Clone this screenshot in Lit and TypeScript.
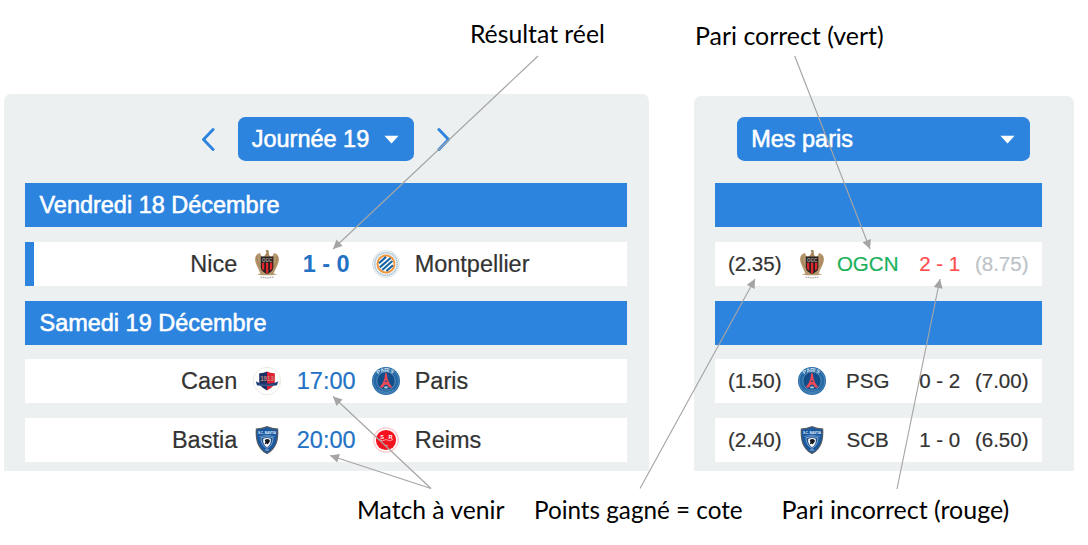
import { LitElement, html, svg, css } from "lit";
import { customElement, property } from "lit/decorators.js";

type Club = "nice" | "montpellier" | "caen" | "paris" | "bastia" | "reims";

const crests: Record<Club, unknown> = {
  nice: svg`
    <path d="M13.6 2.2 C12 .8 12.6 -.2 14 0 C15.8 0 16.2 1.4 15.6 2.6 L16.4 6 L11.8 6 Z" fill="#a5835a"/>
    <path d="M11.5 5.5 C9 8.5 7.6 5 7 3 C3.4 3.6 1.6 7 2.2 10.5 C2.6 14 4.6 17 5.6 19.4 L7.4 23.4 L3.8 24.6 L9.4 25.2 L18.6 25.2 L24.2 24.6 L20.6 23.4 L22.4 19.4 C23.6 17 25.4 14 25.8 10.5 C26.4 7 24.6 3.6 21 3 C20.4 5 19 8.5 16.5 5.5 Z" fill="#b6966c"/>
    <path d="M4 6 C3.4 10 5.2 14 7 17 M24 6 C24.6 10 22.8 14 21 17" stroke="#9a7a50" stroke-width=".8" fill="none"/>
    <path d="M7.8 6.4 H20.4 V17 C20.4 20.5 17.6 22.6 14.1 24 C10.6 22.6 7.8 20.5 7.8 17 Z" fill="#2a2222"/>
    <path d="M9 12.8 H11.2 V20.8 L9 18.8 Z M13 12.8 H15.2 V23 L14.1 23.4 L13 23 Z M17 12.8 H19.2 V18.8 L17 20.8 Z" fill="#e2262c"/>
    <text x="14.1" y="11.9" font-size="5.8" font-weight="700" text-anchor="middle" textLength="10.4" lengthAdjust="spacingAndGlyphs" fill="#a9a19a">OGC</text>
    <path d="M7.5 27 Q14 28.6 20.5 27" stroke="#a9a39d" stroke-width="1.2" stroke-dasharray="1.6 .7" fill="none"/>`,
  montpellier: svg`
    <circle cx="14" cy="14" r="13.4" fill="#f3f6f8" stroke="#d3d9dc" stroke-width=".8"/>
    <circle cx="14" cy="14" r="11.3" fill="none" stroke="#9fbfd1" stroke-width="1.5" stroke-dasharray="1.3 .6"/>
    <circle cx="14" cy="14" r="8.5" fill="#fff" stroke="#f2953d" stroke-width="1.9"/>
    <g stroke="#1565a4" stroke-width="2.1"><path d="M7 13.2 L14 6.9 M7.8 17.4 L18.6 8 M10.2 20 L20.4 11 M14.4 21 L21 15.2"/></g>`,
  caen: svg`
    <circle cx="14" cy="14" r="13.7" fill="#fff" stroke="#eae7dc" stroke-width=".9"/>
    <path d="M6.2 6.2 Q10.5 6.4 14 4.4 V23.4 C10 21.4 6.2 18.6 6.2 14 Z" fill="#1c3162"/>
    <path d="M21.8 6.2 Q17.5 6.4 14 4.4 V23.4 C18 21.4 21.8 18.6 21.8 14 Z" fill="#e01f33"/>
    <path d="M2.8 14.2 Q6 16.6 14 16.6 Q22 16.6 25.2 14.2 L24 18.2 Q20 19.2 14 19.2 Q8 19.2 4 18.2 Z" fill="#1b3c74"/>
    <path d="M6.5 18 Q14 18.8 21.5 18" stroke="#8fa1c1" stroke-width=".4" fill="none"/>
    <text x="14" y="13.9" font-size="6.4" font-weight="700" text-anchor="middle" textLength="13.6" lengthAdjust="spacingAndGlyphs" fill="#c08a7c">1913</text>`,
  paris: svg`
    <circle cx="14" cy="14" r="14" fill="#2468a5"/>
    <circle cx="14" cy="14" r="12.9" fill="none" stroke="#5f94c1" stroke-width=".7"/>
    <circle cx="14" cy="14" r="9.2" fill="#114e89" stroke="#7eaad0" stroke-width=".6"/>
    <text x="6.1 9.1 12.3 15.6 17.7" y="7.5 5.7 4.8 4.8 5.3" rotate="-32 -18 0 10 25" font-size="5.3" font-weight="700" fill="#d4e3f0">PARIS</text>
    <path d="M13.2 6.3 H14.8 L15.5 11.5 L17.3 16 L20.4 20.4 H16.8 Q16.3 17.8 14 17.6 Q11.7 17.8 11.2 20.4 H7.6 L10.7 16 L12.5 11.5 Z" fill="#ee4956"/>
    <path d="M12.8 15 L14 12.8 L15.2 15 Z" fill="#174f88"/>
    <path d="M11.8 20.3 Q14 18.2 16.2 20.3 L15.3 21.6 H12.7 Z" fill="#a9c2d5"/>
    <path d="M6.5 22.7 Q14 28 21.5 22.7" fill="none" stroke="#79a6cc" stroke-width=".9" stroke-dasharray="1.2 .6"/>`,
  bastia: svg`
    <path d="M14 0 Q19 2.4 25.2 2.5 C25.8 13 24.6 22.5 14 28.2 C3.4 22.5 2.2 13 2.8 2.5 Q9 2.4 14 0 Z" fill="#505965"/>
    <path d="M14 1.4 Q19 3.5 24 3.7 C24.3 13 23 21.5 14 26.7 C5 21.5 3.7 13 4 3.7 Q9 3.5 14 1.4 Z" fill="#1759a3"/>
    <path d="M6.2 10.6 Q14 7.6 21.8 10.6" stroke="#8fb0d4" stroke-width=".6" fill="none"/>
    <path d="M8 11.8 Q14 9.6 20 11.8 C20 16 18 20.5 14 22.4 C10 20.5 8 16 8 11.8 Z" fill="#1e518c" stroke="#9fbbd9" stroke-width=".8"/>
    <path d="M10.2 13 Q14 11 17.8 13 Q18.3 18.5 14 21.2 Q9.7 18.5 10.2 13 Z" fill="#fff"/>
    <path d="M11.7 14 Q14.5 12.2 16.7 14 Q17.4 16 15.6 17.3 L14.4 18.6 L13.4 17.5 L11.6 18.4 L12.4 16 Z" fill="#15181e"/>
    <text x="14" y="8" font-size="4.2" font-weight="700" text-anchor="middle" textLength="18" lengthAdjust="spacingAndGlyphs" fill="#e7eef6">S.C. BASTIA</text>
    <path d="M12.2 24 H15.8" stroke="#c1d1e5" stroke-width=".9"/>`,
  reims: svg`
    <circle cx="14" cy="14" r="12.1" fill="none" stroke="#f9babd" stroke-width="1.4" stroke-dasharray="1.4 .5"/>
    <circle cx="14" cy="14" r="10.1" fill="#f5121f"/>
    <text x="10" y="12.6" font-size="5.6" font-weight="700" text-anchor="middle" fill="#fff">S</text>
    <text x="18.4" y="12.6" font-size="5.6" font-weight="700" text-anchor="middle" fill="#fff">R</text>
    <path d="M6.8 13.4 Q10 16 14 13.6 Q18 16 21.2 13.4 M12.4 19.4 H15.6" stroke="#ffc1c4" stroke-width=".8" fill="none"/>`,
};

@customElement("club-crest")
export class ClubCrest extends LitElement {
  @property() club: Club = "nice";
  static styles = css`
    :host { display: block; width: 28px; height: 28px; }
    svg { display: block; overflow: visible; font-family: "Liberation Sans", Arial, sans-serif; -webkit-text-stroke: 0; }
  `;
  render() {
    return html`<svg width="28" height="28" viewBox="0 0 28 28">${crests[this.club]}</svg>`;
  }
}

interface Bet {
  home: string; homeClub: Club; score: string; played?: boolean; away: string; awayClub: Club;
  oddsWin: string; pick: Club; code: string; codeTone: string; guess: string; guessTone: string;
  oddsScore: string; oddsTone: string;
}

const days: { label: string; games: Bet[] }[] = [
  {
    label: "Vendredi 18 Décembre",
    games: [
      { home: "Nice", homeClub: "nice", score: "1 - 0", played: true, away: "Montpellier", awayClub: "montpellier",
        oddsWin: "(2.35)", pick: "nice", code: "OGCN", codeTone: "good", guess: "2 - 1", guessTone: "bad",
        oddsScore: "(8.75)", oddsTone: "muted" },
    ],
  },
  {
    label: "Samedi 19 Décembre",
    games: [
      { home: "Caen", homeClub: "caen", score: "17:00", away: "Paris", awayClub: "paris",
        oddsWin: "(1.50)", pick: "paris", code: "PSG", codeTone: "", guess: "0 - 2", guessTone: "",
        oddsScore: "(7.00)", oddsTone: "" },
      { home: "Bastia", homeClub: "bastia", score: "20:00", away: "Reims", awayClub: "reims",
        oddsWin: "(2.40)", pick: "bastia", code: "SCB", codeTone: "", guess: "1 - 0", guessTone: "",
        oddsScore: "(6.50)", oddsTone: "" },
    ],
  },
];

const notes = [
  { text: "Résultat réel", x: 469.9, y: 43.3, w: 135 },
  { text: "Pari correct (vert)", x: 695, y: 45, w: 188.6 },
  { text: "Match à venir", x: 357, y: 518.5, w: 147.4 },
  { text: "Points gagné = cote", x: 534, y: 518.5, w: 208.6 },
  { text: "Pari incorrect (rouge)", x: 781.5, y: 518.5, w: 227.8 },
];

const arrows = [
  [538, 56, 333, 249],
  [794.7, 56, 870, 249],
  [640, 488.5, 755, 279],
  [897, 489, 940, 279],
  [431, 488.5, 333, 396.5],
  [431, 488.5, 330, 455.5],
];

@customElement("app-root")
export class AppRoot extends LitElement {
  static styles = css`
    :host {
      display: block; position: relative; width: 1088px; height: 545px; overflow: hidden;
      background: #fff; color: #333; font: 23.47px/44px "Liberation Sans", Arial, sans-serif;
    }
    .board { display: flex; align-items: flex-end; gap: 44.5px; height: 470.8px; padding-left: 3.5px; }
    .panel { box-sizing: border-box; background: #ecf0f1; border-radius: 7px 7px 0 0; padding: 0 21.7px; }
    .results { width: 645.5px; height: 377px; padding-top: 23.6px; }
    .bets { width: 380.5px; height: 375.3px; padding-top: 21.9px; padding-right: 32.3px; }
    .bar { display: flex; align-items: center; height: 44px; margin-bottom: 22px; }
    .results .bar { gap: 23px; padding-left: 176.6px; }
    .bets .bar { padding-left: 22px; }
    .chevron { display: block; width: 13px; height: 24px; }
    .select {
      box-sizing: border-box; display: flex; justify-content: space-between; align-items: center;
      width: 176px; height: 44px; padding: 0 15px 0 14px; border-radius: 7.3px; background: #2c84df;
      color: #fff; -webkit-text-stroke: 0.55px #fff;
    }
    .bets .select { width: 293.3px; }
    .caret { display: block; width: 15px; height: 9px; margin-top: 1px; }
    .list { display: flex; flex-direction: column; gap: 14.67px; }
    .day {
      box-sizing: border-box; height: 44px; padding-left: 14.3px; background: #2c84df; color: #fff;
      -webkit-text-stroke: 0.55px #fff;
    }
    .game { box-sizing: border-box; display: grid; align-items: center; height: 44px; background: #fff; -webkit-text-stroke: 0.2px currentColor; }
    .results .game { grid-template-columns: 212px 60px 58px 62px 1fr; }
    .results .played { box-shadow: inset 9px 0 #2c84df; }
    .bets .game { grid-template-columns: 79px 36px 75px 69px 55px; font-size: 20.53px; }
    .cell { text-align: center; white-space: nowrap; }
    .home { text-align: right; }
    .away { text-align: left; margin-left: -2.5px; }
    .crest { justify-self: center; }
    .score { color: #2372c5; margin: 0 -5px; }
    .played .score { font-weight: 700; -webkit-text-stroke: 0; }
    .good { color: #1bb05c; }
    .bad { color: #ff4d4d; }
    .muted { color: #bdc3c7; }
    .notes {
      position: absolute; inset: 0; width: 1088px; height: 545px; pointer-events: none;
      font: 24.4px Lato, "Open Sans", sans-serif; -webkit-text-stroke: 0.2px #000;
    }
  `;

  private chevron(d: string) {
    return html`<svg class="chevron" viewBox="0 0 13 24"><path d=${d} fill="none" stroke="#2c84df" stroke-width="2.9" stroke-linecap="round" stroke-linejoin="miter"/></svg>`;
  }

  private select(label: string) {
    return html`<div class="select"><span>${label}</span><svg class="caret" viewBox="0 0 15 9"><path d="M.4 .8 H14.6 L7.5 8.4 Z" fill="#fff"/></svg></div>`;
  }

  private arrow([x1, y1, x2, y2]: number[]) {
    const angle = (Math.atan2(y2 - y1, x2 - x1) * 180) / Math.PI;
    return svg`
      <line x1=${x1} y1=${y1} x2=${x2} y2=${y2} stroke="#a5a5a5" stroke-width="1.15"/>
      <path d="M0 0 L-9 -4.5 V4.5 Z" fill="#a5a5a5" transform=${`translate(${x2} ${y2}) rotate(${angle})`}/>`;
  }

  render() {
    return html`
      <div class="board">
        <section class="panel results">
          <div class="bar">
            ${this.chevron("M11.1 2.5 L1.5 12.5 L11.1 22.5")}
            ${this.select("Journée 19")}
            ${this.chevron("M1.9 2.5 L11.5 12.5 L1.9 22.5")}
          </div>
          <div class="list">
            ${days.map((d) => html`
              <div class="day">${d.label}</div>
              ${d.games.map((g) => html`
                <div class="game ${g.played ? "played" : ""}">
                  <span class="cell home">${g.home}</span>
                  <club-crest class="crest" .club=${g.homeClub}></club-crest>
                  <span class="cell score">${g.score}</span>
                  <club-crest class="crest" .club=${g.awayClub}></club-crest>
                  <span class="cell away">${g.away}</span>
                </div>`)}`)}
          </div>
        </section>
        <section class="panel bets">
          <div class="bar">${this.select("Mes paris")}</div>
          <div class="list">
            ${days.map((d) => html`
              <div class="day"></div>
              ${d.games.map((g) => html`
                <div class="game">
                  <span class="cell">${g.oddsWin}</span>
                  <club-crest class="crest" .club=${g.pick}></club-crest>
                  <span class="cell ${g.codeTone}">${g.code}</span>
                  <span class="cell ${g.guessTone}">${g.guess}</span>
                  <span class="cell ${g.oddsTone}">${g.oddsScore}</span>
                </div>`)}`)}
          </div>
        </section>
      </div>
      <svg class="notes" viewBox="0 0 1088 545">
        ${arrows.map((a) => this.arrow(a))}
        ${notes.map((n) => svg`<text x=${n.x} y=${n.y} textLength=${n.w} lengthAdjust="spacingAndGlyphs" fill="#000">${n.text}</text>`)}
      </svg>`;
  }
}
